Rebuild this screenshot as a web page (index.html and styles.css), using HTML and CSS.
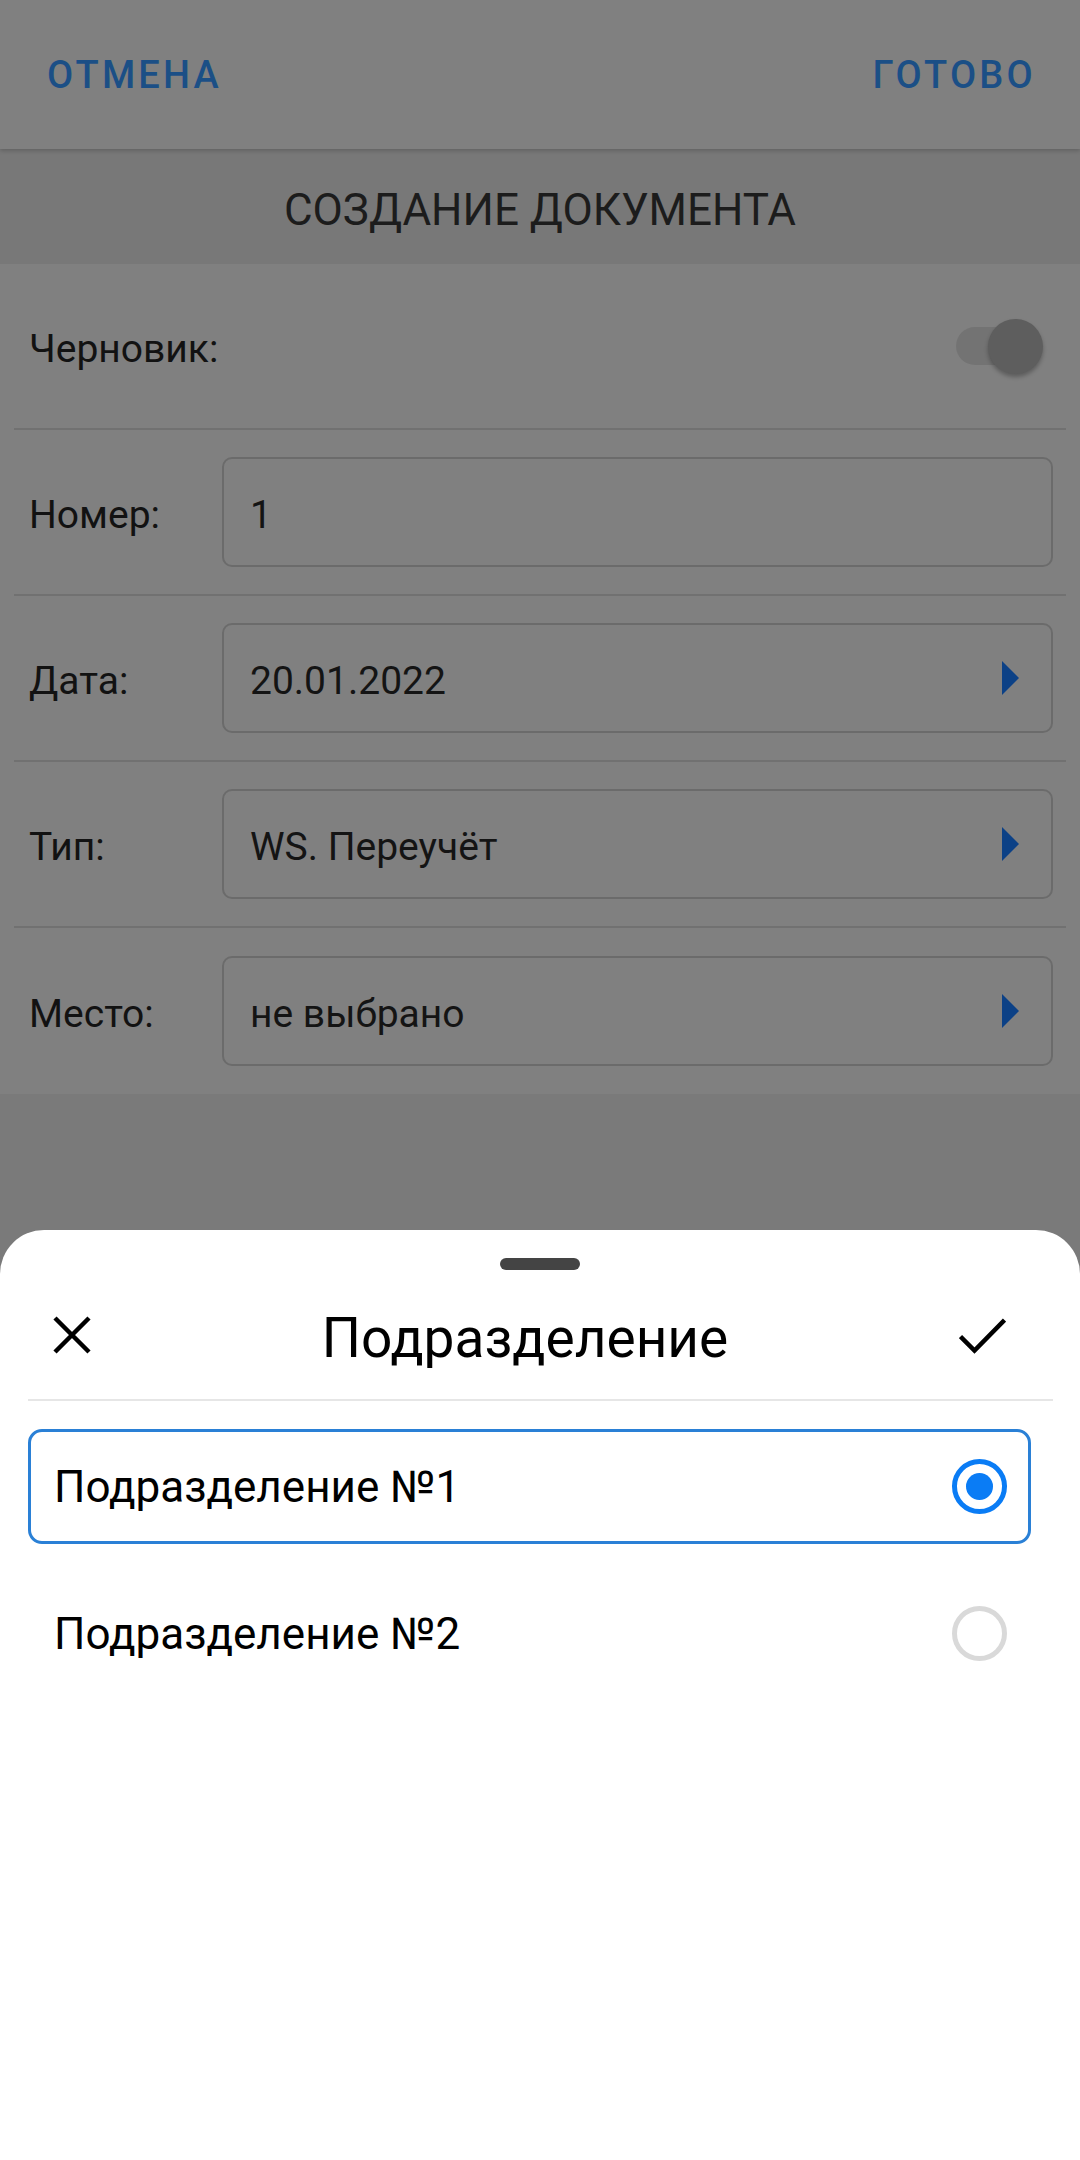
FILE: index.html
```html
<!DOCTYPE html>
<html lang="ru">
<head>
<meta charset="utf-8">
<title>Создание документа</title>
<link rel="stylesheet" href="styles.css">
</head>
<body>
<div class="page">
  <div class="topbar">
    <span class="tb-btn">ОТМЕНА</span>
    <span class="tb-btn">ГОТОВО</span>
  </div>
  <div class="title-bar">СОЗДАНИЕ ДОКУМЕНТА</div>
  <div class="form">
    <div class="row">
      <span class="label">Черновик:</span>
      <span class="toggle"><span class="track"></span><span class="thumb"></span></span>
    </div>
    <div class="row">
      <span class="label">Номер:</span>
      <div class="field"><span class="value">1</span></div>
    </div>
    <div class="row">
      <span class="label">Дата:</span>
      <div class="field"><span class="value">20.01.2022</span><svg class="arrow" width="17" height="34" viewBox="0 0 17 34"><polygon points="0,0 17,17 0,34"/></svg></div>
    </div>
    <div class="row">
      <span class="label">Тип:</span>
      <div class="field"><span class="value">WS. Переучёт</span><svg class="arrow" width="17" height="34" viewBox="0 0 17 34"><polygon points="0,0 17,17 0,34"/></svg></div>
    </div>
    <div class="row last">
      <span class="label">Место:</span>
      <div class="field"><span class="value">не выбрано</span><svg class="arrow" width="17" height="34" viewBox="0 0 17 34"><polygon points="0,0 17,17 0,34"/></svg></div>
    </div>
  </div>
</div>

<div class="sheet">
  <div class="handle"></div>
  <div class="sheet-header">
    <svg class="icon-close" width="38" height="38" viewBox="0 0 38 38"><path d="M2 2 L36 36 M36 2 L2 36"/></svg>
    <div class="sheet-title">Подразделение</div>
    <svg class="icon-check" width="47" height="37" viewBox="0 0 47 37"><path d="M1.5 19.5 L15.5 33.5 L45.5 3"/></svg>
  </div>
  <div class="divider"></div>
  <div class="options">
    <div class="option selected">
      <span class="opt-text">Подразделение №1</span>
      <span class="radio on"><span class="dot"></span></span>
    </div>
    <div class="option">
      <span class="opt-text">Подразделение №2</span>
      <span class="radio"></span>
    </div>
  </div>
</div>
</body>
</html>
```

FILE: styles.css
```css
* { box-sizing: border-box; }
html, body { margin: 0; padding: 0; }
body {
  width: 1080px;
  height: 2160px;
  background: #7a7a7a;
  font-family: Roboto, "Noto Sans", "Liberation Sans", sans-serif;
  overflow: hidden;
}
.page { width: 1080px; }

.topbar {
  height: 149px;
  background: #808080;
  display: flex;
  align-items: center;
  justify-content: space-between;
  padding: 0 44px 0 47px;
  box-shadow: 0 2px 4px rgba(0,0,0,0.18);
  position: relative;
  z-index: 1;
}
.tb-btn {
  font-size: 38px;
  font-weight: 500;
  letter-spacing: 0.085em;
  color: #1b4f86;
}

.title-bar {
  height: 115px;
  background: #787878;
  display: flex;
  align-items: center;
  justify-content: center;
  font-size: 44px;
  color: #1c1c1c;
  padding-top: 6px;
}

.form { background: #808080; }
.row {
  height: 166px;
  margin: 0 14px;
  border-bottom: 2px solid #717171;
  display: flex;
  align-items: center;
  padding: 0 13px 0 15px;
}
.row.last { border-bottom: none; height: 166px; }
.label {
  width: 193px;
  flex: none;
  font-size: 39px;
  color: #121212;
  padding-top: 6px;
}
.toggle {
  margin-left: auto;
  margin-right: 10px;
  position: relative;
  width: 87px;
  height: 55px;
  display: flex;
  align-items: center;
}
.track {
  width: 74px;
  height: 38px;
  border-radius: 19px;
  background: #737373;
}
.thumb {
  position: absolute;
  right: 0;
  top: 0;
  width: 55px;
  height: 55px;
  border-radius: 50%;
  background: #5e5e5e;
  box-shadow: 0 3px 4px rgba(0,0,0,0.28);
}
.field {
  flex: 1;
  height: 110px;
  border: 2px solid #6b6b6b;
  border-radius: 10px;
  display: flex;
  align-items: center;
  justify-content: space-between;
  padding: 0 32px 0 26px;
}
.value {
  font-size: 39px;
  color: #141414;
  padding-top: 6px;
}
.arrow polygon { fill: #0c4186; }

.sheet {
  position: fixed;
  left: 0;
  right: 0;
  bottom: 0;
  height: 930px;
  background: #ffffff;
  border-radius: 44px 44px 0 0;
  z-index: 5;
}
.handle {
  width: 80px;
  height: 12px;
  border-radius: 6px;
  background: #444444;
  margin: 28px auto 0;
}
.sheet-header {
  height: 129px;
  display: flex;
  align-items: center;
  padding: 0 74px 0 53px;
}
.icon-close path, .icon-check path {
  stroke: #000;
  stroke-width: 4.5;
  fill: none;
}
.icon-check { margin-top: 2px; }
.sheet-title {
  flex: 1;
  text-align: center;
  font-size: 55px;
  color: #000;
  padding-top: 6px;
}
.divider {
  height: 2px;
  background: #e6e6e6;
  margin: 0 27px 0 28px;
}
.options {
  padding: 28px 49px 0 28px;
  display: flex;
  flex-direction: column;
  gap: 32px;
}
.option {
  height: 115px;
  border: 3px solid transparent;
  border-radius: 14px;
  display: flex;
  align-items: center;
  justify-content: space-between;
  padding: 0 21px 0 23px;
}
.option.selected { border-color: #2a80d6; }
.opt-text {
  font-size: 44px;
  color: #000;
}
.radio {
  width: 55px;
  height: 55px;
  border-radius: 50%;
  border: 5px solid #d9d9d9;
  display: flex;
  align-items: center;
  justify-content: center;
}
.radio.on { border-color: #0a7cf5; }
.dot {
  width: 27px;
  height: 27px;
  border-radius: 50%;
  background: #0a7cf5;
}
```
